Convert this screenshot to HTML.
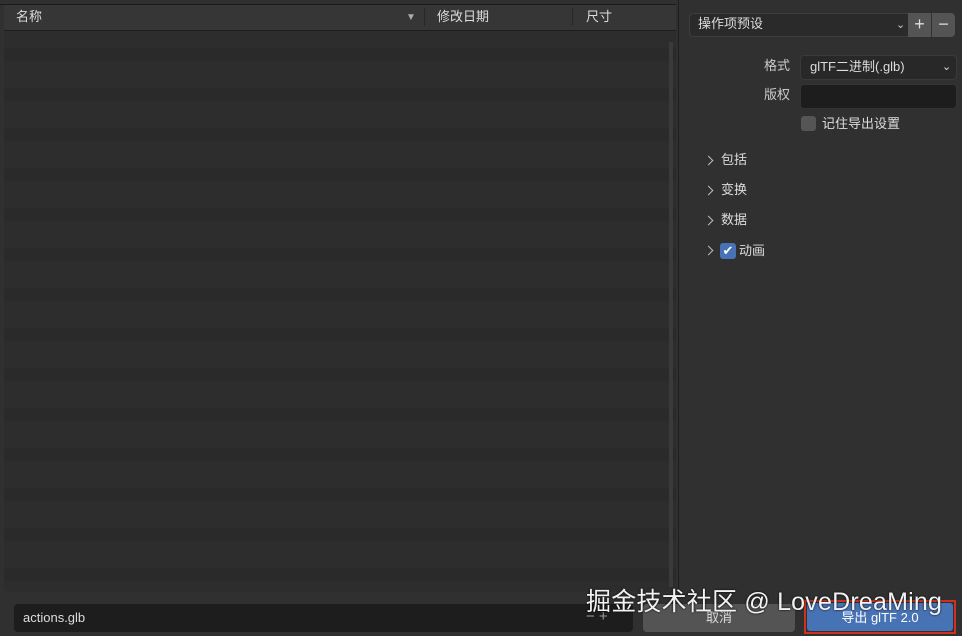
<html><head><style>
body{margin:0;width:962px;height:636px;background:#303030;font-family:"Liberation Sans","Noto Sans CJK SC",sans-serif;color:#ddd;font-size:13px;position:relative;overflow:hidden}
.a{position:absolute;line-height:16px}
.list{left:4px;top:31px;width:672px;height:561px;background:repeating-linear-gradient(#2d2d2d 0 17px,#2a2a2a 17px 30px,#2d2d2d 30px 40px);border-radius:0 0 6px 6px}
.chev{display:inline-block;width:6px;height:6px;border-right:1.3px solid #bbb;border-top:1.3px solid #bbb;transform:rotate(45deg)}
</style></head><body>
<div class="a" style="left:0;top:4px;width:676px;height:1px;background:#1a1a1a"></div>
<div class="a" style="left:4px;top:5px;width:672px;height:25px;background:#363636"></div>
<div class="a" style="left:16px;top:9px">名称</div>
<div class="a" style="left:406px;top:10px;font-size:10px;color:#aaa">▼</div>
<div class="a" style="left:424px;top:8px;width:1px;height:18px;background:#282828"></div>
<div class="a" style="left:437px;top:9px">修改日期</div>
<div class="a" style="left:572px;top:8px;width:1px;height:18px;background:#282828"></div>
<div class="a" style="left:586px;top:9px">尺寸</div>
<div class="a" style="left:4px;top:30px;width:672px;height:1px;background:#1e1e1e"></div>
<div class="a list"></div>
<div class="a" style="left:669px;top:42px;width:4px;height:545px;background:#3a3a3a"></div>
<div class="a" style="left:678px;top:0;width:1px;height:590px;background:#1e1e1e"></div>
<div class="a" style="left:689px;top:13px;width:218px;height:22px;background:#2a2a2a;border:1px solid #3e3e3e;border-radius:4px 0 0 4px"></div>
<div class="a" style="left:698px;top:16px">操作项预设</div>
<div class="a" style="left:896px;top:17px;font-size:11px;color:#ccc">⌄</div>
<div class="a" style="left:908px;top:13px;width:23px;height:24px;background:#545454;text-align:center;line-height:23px;font-size:18px">+</div>
<div class="a" style="left:932px;top:13px;width:23px;height:24px;background:#545454;border-radius:0 4px 4px 0;text-align:center;line-height:23px;font-size:18px">−</div>
<div class="a" style="left:764px;top:58px;color:#ccc">格式</div>
<div class="a" style="left:800px;top:55px;width:155px;height:23px;background:#282828;border:1px solid #3a3a3a;border-radius:4px"></div>
<div class="a" style="left:810px;top:59px">glTF二进制(.glb)</div>
<div class="a" style="left:942px;top:59px;font-size:11px">⌄</div>
<div class="a" style="left:764px;top:87px;color:#ccc">版权</div>
<div class="a" style="left:800px;top:84px;width:155px;height:23px;background:#1d1d1d;border:1px solid #333;border-radius:4px"></div>
<div class="a" style="left:801px;top:116px;width:15px;height:15px;background:#555;border-radius:3px"></div>
<div class="a" style="left:822px;top:116px">记住导出设置</div>
<div class="a" style="left:705px;top:157px"><span class="chev"></span></div><div class="a" style="left:721px;top:152px">包括</div>
<div class="a" style="left:705px;top:187px"><span class="chev"></span></div><div class="a" style="left:721px;top:182px">变换</div>
<div class="a" style="left:705px;top:217px"><span class="chev"></span></div><div class="a" style="left:721px;top:212px">数据</div>
<div class="a" style="left:705px;top:247px"><span class="chev"></span></div>
<div class="a" style="left:720px;top:243px;width:16px;height:16px;background:#4772b3;border-radius:3px;color:#fff;text-align:center;font-size:13px;line-height:16px">✔</div>
<div class="a" style="left:739px;top:243px">动画</div>
<div class="a" style="left:14px;top:604px;width:619px;height:28px;background:#1d1d1d;border-radius:4px"></div>
<div class="a" style="left:23px;top:610px;color:#ddd">actions.glb</div>
<div class="a" style="left:586px;top:609px;color:#999;font-size:15px">− +</div>
<div class="a" style="left:643px;top:604px;width:152px;height:28px;background:#545454;border-radius:4px;text-align:center;line-height:28px">取消</div>
<div class="a" style="left:804px;top:600px;width:152px;height:34px;border:2px solid #d0301f;box-sizing:border-box"></div>
<div class="a" style="left:807px;top:603px;width:146px;height:28px;background:#4772b3;border-radius:3px;text-align:center;line-height:30px;color:#fff">导出 glTF 2.0</div>
<div class="a" style="left:586px;top:587px;font-size:25px;line-height:30px;color:#f2f2f2;text-shadow:0 0 2px #000;letter-spacing:0.2px">掘金技术社区 @ LoveDreaMing</div>
</body></html>
